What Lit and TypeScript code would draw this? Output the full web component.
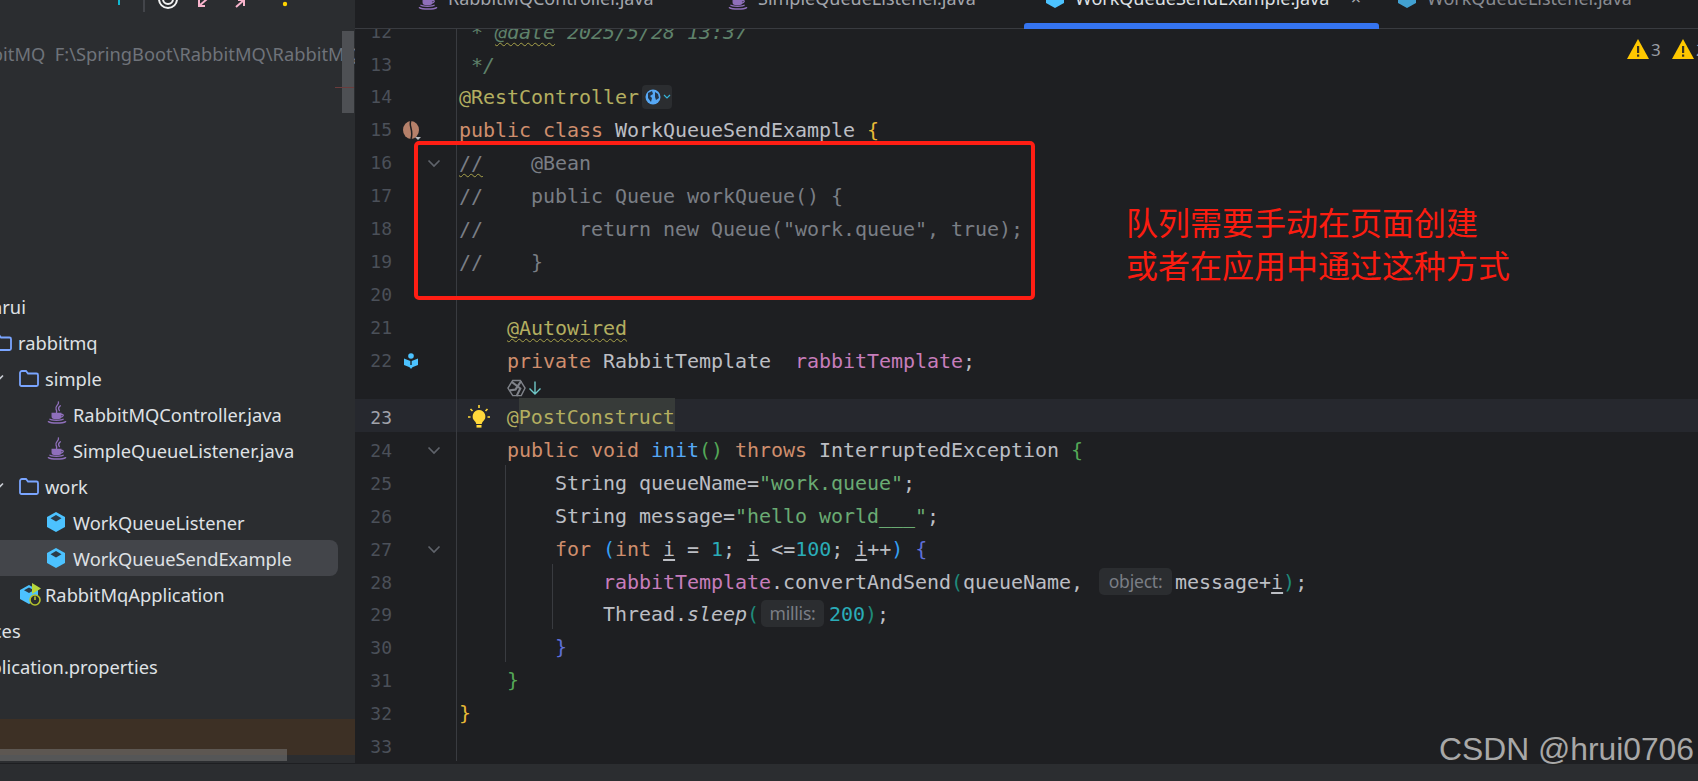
import { LitElement, html, css, svg, nothing } from "lit";
import { customElement } from "lit/decorators.js";

const s = (c: string, text: string, cls2 = "") => html`<span class="${c} ${cls2}">${text}</span>`;

const javaIcon = html`<svg class="ico java" viewBox="0 0 20 24" fill="none" stroke="#8f6fbb" stroke-width="1.4" stroke-linecap="round"><path d="M11.5 1c1 3-4 4.500-2.500 7.500.5 1 1 2 .5 3.500"/><path d="M13.500 5c-2 1.500-2.500 3-1 5"/><path d="M5 13h9v3c0 1.500-1 2-2 2H7c-1 0-2-.5-2-2z" fill="#8f6fbb"/><path d="M14 14h1.500c1.500 0 1.500 2.500-1.500 2.800"/><path d="M2.500 19c1 1.500 13 1.500 14 0"/><path d="M1 21.500c3 2 15 2 18 0"/></svg>`;
const cube = (fill = "#4cc2ff") => html`<svg class="ico cube" viewBox="0 0 18 20"><polygon points="9,0 18,5 18,15 9,20 0,15 0,5" fill="${fill}"/><polygon points="9,3 14.500,6.300 9,9.500 3.500,6.300" fill="#2b3b48"/></svg>`;
const folder = html`<svg class="ico folder" viewBox="0 0 20 17" fill="none" stroke="#7aa5ff" stroke-width="1.800"><path d="M1 3a2 2 0 0 1 2-2h4l2 2.500h8.500A1.500 1.500 0 0 1 19 5v9.500a1.500 1.500 0 0 1-1.500 1.500h-15A1.500 1.500 0 0 1 1 14.500z"/></svg>`;
const chev = html`<svg class="tchev" viewBox="0 0 12 8" fill="none" stroke="#c9ccd2" stroke-width="1.600"><path d="M1 1.500l5 5 5-5"/></svg>`;
const appIcon = html`<svg class="ico app" viewBox="0 0 21 23"><polygon points="9,2 18,7 18,16 9,21 0,16 0,7" fill="#4cc2ff"/><polygon points="9,4.500 14,7.300 9,10 4,7.300" fill="#2b3b48"/><polygon points="12,0 21,5.500 12,11" fill="#b6d63c"/><circle cx="15" cy="17" r="5" fill="#2b2d30" stroke="#b4c22c" stroke-width="1.600"/><path d="M15 13.500v3.500" stroke="#b4c22c" stroke-width="1.600"/></svg>`;
const foldIcon = html`<svg class="fold" viewBox="0 0 14 9" fill="none" stroke="#5f636b" stroke-width="1.700"><path d="M1.500 1.500L7 7l5.500-5.500"/></svg>`;
const bean = html`<svg class="bean" viewBox="0 0 19 20"><ellipse cx="8" cy="9" rx="8" ry="9" fill="#b5806a"/><path d="M8 0c-3 4 3 9 0 18" stroke="#1e1f22" stroke-width="1.500" fill="none"/><polygon points="12,16 18,16 15,19" fill="#b8bbc1"/></svg>`;
const bookIcon = html`<svg class="book" viewBox="0 0 14 16"><circle cx="7" cy="3" r="2.800" fill="#4cc2ff"/><path d="M0 5.500l6.300 2.500v6.500L0 12zM14 5.500L7.700 8v6.500L14 12z" fill="#4cc2ff"/><path d="M4 12l3 4 3-4z" fill="#4cc2ff"/></svg>`;
const bulb = html`<svg class="bulb" viewBox="0 0 22 24" fill="#ffd83b"><path d="M11 5a6.500 6.500 0 0 0-4 11.500c.8.800 1 1.500 1.200 2.500h5.600c.2-1 .4-1.700 1.200-2.500A6.500 6.500 0 0 0 11 5z"/><rect x="8.500" y="20" width="5" height="2.600"/><path d="M11 0v3M2.500 4l2 2M19.500 4l-2 2M0 12h2.500M19.500 12H22" stroke="#ffd83b" stroke-width="1.600"/></svg>`;
const aiIcon = html`<svg class="ai" viewBox="0 0 20 20" fill="none" stroke="#7f8289" stroke-width="2.200"><path d="M6 1.500h8l5 8-4 8H6l-5-8z" stroke-width="1.500"/><path d="M5 3l9 7-4 8M15 2L9 11l-6 1"/></svg>`;
const downArrow = html`<svg class="arrow" viewBox="0 0 14 14" fill="none" stroke="#6fc7c7" stroke-width="1.400"><path d="M7 .5v12.500M1.500 7.500L7 13l5.500-5.500"/></svg>`;
const globe = html`<span class="chip-globe"><svg viewBox="0 0 16 16" class="globe"><circle cx="8" cy="8" r="7.500" fill="#56a8f5"/><path d="M3 4l4-2 1 3-3 2 2 2-1 4-3-4zM10 3l3 2 1 4-3 2-1-3z" fill="#23354a"/></svg><svg viewBox="0 0 8 6" class="gchev" fill="none" stroke="#35b4d8" stroke-width="1.200"><path d="M1 1l3 3 3-3"/></svg></span>`;

const warn = html`<svg class="warn" viewBox="0 0 22 20"><polygon points="11,0 22,20 0,20" fill="#ffc800"/><rect x="10" y="7" width="2.200" height="7" fill="#3a3320"/><rect x="10" y="15.500" width="2.200" height="2.200" fill="#3a3320"/></svg>`;

const kw = (t: string) => s("kw", t);
const p = (t: string) => s("pl", t);
const i = html`<span class="pl under">i</span>`;
const cm = (t: string) => s("cm", t);

interface Line { n: number; code: unknown; g?: string; mark?: unknown; fold?: boolean; cur?: boolean; }

const lines: Line[] = [
  { n: 12, code: html`<span class="doc"> * </span><span class="doc wavy">@date</span><span class="doc"> 2025/5/28 13:37</span>` },
  { n: 13, code: html`<span class="doc"> */</span>` },
  { n: 14, code: html`${s("an", "@RestController")}${globe}` },
  { n: 15, mark: bean, code: html`${kw("public class ")}${p("WorkQueueSendExample ")}${s("b-y", "{")}` },
  { n: 16, fold: true, code: html`<span class="cm wavy">//</span>${cm("    @Bean")}` },
  { n: 17, code: cm("//    public Queue workQueue() {") },
  { n: 18, code: cm('//        return new Queue("work.queue", true);') },
  { n: 19, code: cm("//    }") },
  { n: 20, code: nothing },
  { n: 21, code: html`    <span class="an wavy">@Autowired</span>` },
  { n: 22, mark: bookIcon, code: html`    ${kw("private ")}${p("RabbitTemplate  ")}${s("fd", "rabbitTemplate")}${p(";")}` },
  { n: 23, cur: true, code: html`<span class="bulbcell">${bulb}</span>${s("an", "@")}<span class="an hl">PostConstruct</span>` },
  { n: 24, fold: true, code: html`    ${kw("public void ")}${s("fn", "init")}${s("b-g", "()")}${kw(" throws ")}${p("InterruptedException ")}${s("b-g", "{")}` },
  { n: 25, g: "g1", code: html`        ${p("String queueName=")}${s("st", '"work.queue"')}${p(";")}` },
  { n: 26, g: "g1", code: html`        ${p("String message=")}${s("st", '"hello world___"')}${p(";")}` },
  { n: 27, g: "g1", fold: true, code: html`        ${kw("for ")}${s("b-b", "(")}${kw("int ")}${i}${p(" = ")}${s("nu", "1")}${p("; ")}${i}${p(" <=")}${s("nu", "100")}${p("; ")}${i}${p("++")}${s("b-b", ")")}${p(" ")}${s("b-p", "{")}` },
  { n: 28, g: "g1 g2", code: html`            ${s("fd", "rabbitTemplate")}${p(".convertAndSend")}${s("b-t", "(")}${p("queueName, ")}<span class="hint obj">object:</span>${p("message+")}${i}${s("b-t", ")")}${p(";")}` },
  { n: 29, g: "g1 g2", code: html`            ${p("Thread.")}<span class="pl it">sleep</span>${s("b-t", "(")}<span class="hint mil">millis:</span>${s("nu", "200")}${s("b-t", ")")}${p(";")}` },
  { n: 30, g: "g1", code: html`        ${s("b-p", "}")}` },
  { n: 31, code: html`    ${s("b-g", "}")}` },
  { n: 32, code: s("b-y", "}") },
  { n: 33, code: nothing },
];

const tree = [
  { off: -9, text: "hrui" },
  { off: -8, icon: folder, text: "rabbitmq" },
  { off: -8, chev: true, icon: folder, text: "simple" },
  { off: 47, icon: javaIcon, text: "RabbitMQController.java" },
  { off: 47, icon: javaIcon, text: "SimpleQueueListener.java" },
  { off: -8, chev: true, icon: folder, text: "work" },
  { off: 47, icon: cube(), text: "WorkQueueListener" },
  { off: 47, icon: cube(), text: "WorkQueueSendExample", sel: true },
  { off: 20, icon: appIcon, text: "RabbitMqApplication", app: true },
  { off: -63, text: "resources" },
  { off: -31, text: "application.properties" },
];

@customElement("app-root")
export class AppRoot extends LitElement {
  static styles = css`
    :host { display: block; width: 1698px; height: 781px; overflow: hidden; background: #2b2d30; position: relative; font-family: "Noto Sans", "Liberation Sans", sans-serif; }
    .main { display: flex; height: 763px; background: #1e1f22; border-bottom: 1px solid #1e1f22; }

    .side { width: 355px; flex: none; background: #2b2d30; position: relative; overflow: hidden; display: flex; flex-direction: column; font-size: 18.300px; color: #dfe1e5; }
    .toolbar { height: 36px; flex: none; display: block; }
    .path { height: 36px; flex: none; line-height: 36px; white-space: pre; color: #6f737a; margin-left: -41px; }
    .sp1 { height: 216px; flex: none; }
    .row { height: 36px; flex: none; display: flex; align-items: center; white-space: pre; }
    .row.sel { background: #43454a; width: 338px; border-radius: 0 8px 8px 0; }
    .ico { flex: none; display: block; }
    .java { width: 20px; height: 23px; margin: -3px 6px 0 0; }
    .cube { width: 18px; height: 20px; margin-right: 8px; }
    .folder { width: 20px; height: 17px; margin-right: 6px; }
    .app { width: 21px; height: 23px; margin-right: 4px; }
    .tchev { width: 12px; height: 8px; margin-right: 15px; flex: none; }
    .sp2 { height: 35px; flex: none; }
    .brown { height: 36px; flex: none; background: #3d3025; }
    .hscroll { position: absolute; left: 0; top: 749px; width: 287px; height: 12px; background: rgba(120, 120, 120, .55); }
    .vscroll { position: absolute; left: 342px; top: 31px; width: 12px; height: 82px; background: #4e5054; }
    .redtick { position: absolute; left: 335px; top: 87px; width: 19px; height: 1px; background: #6b3c3c; }

    .editor { flex: 1; min-width: 0; display: flex; flex-direction: column; position: relative; overflow: hidden; }
    .tabs { height: 29px; flex: none; display: flex; padding-left: 41px; border-bottom: 1px solid #393b40; box-sizing: border-box; font-size: 18px; color: #a3a6ad; white-space: pre; position: relative; z-index: 2; background: #1e1f22; }
    .tab { display: flex; align-items: center; height: 24px; margin-top: -14px; padding-left: 22px; position: relative; flex: none; box-sizing: border-box; }
    .tab .java { margin: 0 10px 0 0; }
    .tab .cube { margin: 0 11px 0 0; }
    .t1 { width: 310px; }
    .t2 { width: 318px; }
    .t3 { width: 355px; color: #dfe1e5; }
    .t3::after { content: ""; position: absolute; left: 0; right: 0; top: 37px; height: 6px; background: #3574f0; border-radius: 3px 3px 0 0; }
    .close { position: absolute; right: 18px; top: 0; color: #a8abb2; font-size: 18px; }
    .t4 { padding-left: 19px; opacity: .8; }

    .code { flex: 1; min-height: 0; overflow: hidden; font-family: "DejaVu Sans Mono", monospace; font-size: 20px; letter-spacing: -.04px; }
    .list { margin-top: -13.300px; }
    .ln { display: grid; grid-template-columns: 37px 32px 20px 12px 1fr; grid-template-rows: 32.900px; height: 32.900px; line-height: 32.900px; }
    .ln.low { line-height: 37.900px; }
    .ln.cur { background: #26282e; }
    .num { color: #4b5059; font-size: 18px; text-align: right; letter-spacing: 0; }
    .cur .num { color: #a1a3ab; }
    .mk { display: flex; align-items: center; padding-left: 10px; }
    .fc { display: flex; align-items: center; justify-content: center; }
    .low .fc { padding-top: 5px; }
    .fold { width: 14px; height: 9px; }
    .bean { width: 19px; height: 20px; margin-left: 1px; }
    .book { width: 14px; height: 16px; margin-left: 2px; }
    .cd { border-left: 1px solid #393b40; padding-left: 2px; white-space: pre; color: #bcbec4; position: relative; }
    .cd.g1 { background: linear-gradient(#393b40, #393b40) 48px 0 / 1px 100% no-repeat; }
    .cd.g1.g2 { background: linear-gradient(#393b40, #393b40) 48px 0 / 1px 100% no-repeat, linear-gradient(#393b40, #393b40) 95px 0 / 1px 100% no-repeat; }
    .inlay { height: 21.600px; display: grid; grid-template-columns: 101px 1fr; }
    .inlay .cd { display: flex; align-items: center; padding-left: 50px; gap: 2px; height: 21.600px; }
    .ai { width: 19px; height: 19px; }
    .arrow { width: 14px; height: 14px; }
    .bulbcell { display: inline-flex; width: 47.840px; justify-content: center; align-items: center; vertical-align: middle; height: 24px; margin-top: -3px; }
    .bulb { width: 22px; height: 24px; margin-left: -7px; }

    .kw { color: #cf8e6d; }
    .pl { color: #bcbec4; }
    .an { color: #b3ae60; }
    .st { color: #6aab73; }
    .nu { color: #2aacb8; }
    .cm { color: #7a7e85; }
    .doc { color: #5f826b; font-style: italic; }
    .fn { color: #56a8f5; }
    .fd { color: #c77dbb; }
    .it { font-style: italic; }
    .under { text-decoration: underline; text-underline-offset: 3px; }
    .wavy { text-decoration: underline wavy #a8a24a 1px; text-underline-offset: 3px; }
    .hl { background: #373b39; padding: 7.300px 0 2.300px; }
    .b-y { color: #e8ba36; }
    .b-g { color: #54a857; }
    .b-b { color: #359ff4; }
    .b-p { color: #5e6fd8; }
    .b-t { color: #1f8a7a; }
    .chip-globe { display: inline-flex; align-items: center; gap: 2px; background: #2b2d30; border-radius: 4px; height: 24px; width: 30px; box-sizing: border-box; padding-left: 3px; margin-left: 3px; vertical-align: middle; margin-top: -3px; }
    .globe { width: 16px; height: 16px; }
    .gchev { width: 8px; height: 6px; }
    .hint { display: inline-block; font-family: "Noto Sans", sans-serif; font-size: 17.500px; letter-spacing: -.2px; color: #7a7e85; background: #2b2d30; border-radius: 5px; height: 27px; line-height: 26px; text-align: center; vertical-align: 1px; box-sizing: border-box; }
    .hint.obj { width: 73px; margin: 0 3px 0 4px; }
    .hint.mil { width: 63px; margin: 0 5px 0 2px; }

    .warns { position: absolute; top: 39px; right: 0; display: flex; align-items: center; color: #9a9da4; font-size: 17px; line-height: 19px; width: 71px; overflow: hidden; }
    .warn { width: 22px; height: 20px; flex: none; }
    .warns span { width: 23px; padding-left: 2px; box-sizing: border-box; flex: none; }

    .box { position: absolute; left: 414px; top: 141px; width: 621px; height: 159px; box-sizing: border-box; border: 4px solid #ff1e14; border-radius: 5px; pointer-events: none; }
    .note { position: absolute; left: 1126px; top: 200px; font-family: "Noto Sans CJK SC", sans-serif; font-size: 32px; line-height: 43px; color: #fb1c10; white-space: pre; }
    .mark { position: absolute; left: 1439px; top: 731px; font-family: "Liberation Sans", sans-serif; font-size: 31.800px; line-height: 37px; color: #a8a8a8; text-shadow: 1px 1px 1px #222; white-space: pre; }
    .status { height: 17px; background: #2b2d30; }
  `;

  render() {
    return html`
      <div class="main">
        <aside class="side">
          <svg class="toolbar" viewBox="0 0 355 36">
            ${svg`<rect x="118" y="0" width="2" height="5" fill="#10b6d0"/><rect x="143" y="0" width="2" height="12" fill="#43454a"/>
            <g fill="none" stroke="#f2f2f2" stroke-width="2"><circle cx="168" cy="-1" r="9"/><circle cx="168" cy="-1" r="5"/></g>
            <path d="M199 6l8-7M199 0v6h6" fill="none" stroke="#f8b4cc" stroke-width="2"/>
            <path d="M236 7l8-7M238 0h6v6" fill="none" stroke="#f8b4cc" stroke-width="2"/>
            <circle cx="285" cy="4" r="2.200" fill="#ffd400"/>`}
          </svg>
          <div class="path">RabbitMQ  F:\\SpringBoot\\RabbitMQ\\RabbitMQ</div>
          <div class="sp1"></div>
          ${tree.map(r => html`<div class="row ${r.sel ? "sel" : ""}"><div class="row" style="margin-left:${r.off}px">${r.chev ? chev : nothing}${r.icon ?? nothing}${r.text}</div></div>`)}
          <div class="sp2"></div>
          <div class="brown"></div>
          <div class="hscroll"></div>
          <div class="vscroll"></div>
          <div class="redtick"></div>
        </aside>
        <section class="editor">
          <div class="tabs">
            <div class="tab t1">${javaIcon}RabbitMQController.java</div>
            <div class="tab t2">${javaIcon}SimpleQueueListener.java</div>
            <div class="tab t3">${cube()}WorkQueueSendExample.java<span class="close">×</span></div>
            <div class="tab t4">${cube()}WorkQueueListener.java</div>
          </div>
          <div class="code"><div class="list">
            ${lines.map(l => html`
              <div class="ln ${l.cur ? "cur" : ""} ${l.n >= 23 ? "low" : ""}">
                <div class="num">${l.n}</div>
                <div class="mk">${l.mark ?? nothing}</div>
                <div class="fc">${l.fold ? foldIcon : nothing}</div>
                <div></div>
                <div class="cd ${l.g ?? ""}">${l.code}</div>
              </div>
              ${l.n === 22 ? html`<div class="inlay"><div></div><div class="cd">${aiIcon}${downArrow}</div></div>` : nothing}
            `)}
          </div></div>
          <div class="warns">${warn}<span>3</span>${warn}<span>2</span></div>
        </section>
      </div>
      <div class="status"></div>
      <div class="box"></div>
      <div class="note">队列需要手动在页面创建
或者在应用中通过这种方式</div>
      <div class="mark">CSDN @hrui0706</div>
    `;
  }
}
